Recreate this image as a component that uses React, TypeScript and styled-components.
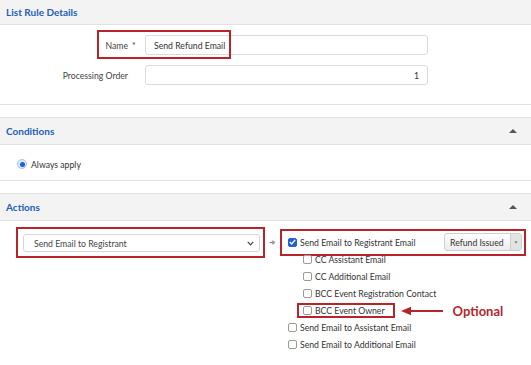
import React from 'react'
import styled, { createGlobalStyle } from 'styled-components'

const GlobalStyle = createGlobalStyle`
  body {
    margin: 0;
    background: #ffffff;
    font-family: Lato, "Liberation Sans", sans-serif;
    font-size: 8.7px;
    color: #333333;
  }
`

const Page = styled.div`
  width: 531px;
  height: 365px;
  overflow: hidden;
`

const Section = styled.section`
  border-top: 1px solid #e2e2e2;
  border-bottom: 1px solid #e2e2e2;
  margin-bottom: 12px;

  &:first-child {
    border-top: none;
  }
  &:last-child {
    border-bottom: none;
    margin-bottom: 0;
  }
`

const SectionHeader = styled.div`
  height: 26px;
  display: flex;
  align-items: center;
  justify-content: space-between;
  padding: 0 14px 0 6px;
  background: #f3f3f3;
  border-bottom: 1px solid #e2e2e2;

  ${Section}:first-child & {
    height: 24px;
  }
`

const Title = styled.h2`
  margin: 0;
  font-size: 10px;
  font-weight: 700;
  color: #2460b5;
`

const Collapse = styled.span`
  width: 0;
  height: 0;
  border-left: 4px solid transparent;
  border-right: 4px solid transparent;
  border-bottom: 4px solid #555555;
`

const FormBody = styled.div`
  display: grid;
  grid-template-columns: 128px 283px;
  column-gap: 17px;
  row-gap: 10px;
  padding: 10px 0 19px;
`

const FieldLabel = styled.label`
  position: relative;
  align-self: center;
  text-align: right;
  color: #444444;
`

const Required = styled.span`
  position: absolute;
  left: calc(100% + 4px);
  top: 0;
`

const FieldWrap = styled.div`
  position: relative;
`

const TextInput = styled.div<{ $align?: 'left' | 'right' }>`
  height: 20px;
  box-sizing: border-box;
  display: flex;
  align-items: center;
  justify-content: ${({ $align }) => ($align === 'right' ? 'flex-end' : 'flex-start')};
  padding: 0 8px;
  border: 1px solid #dcdcdc;
  border-radius: 3px;
  background: #ffffff;
  color: #333333;
`

const Highlight = styled.span<{ $t: number; $r: number; $b: number; $l: number }>`
  position: absolute;
  top: ${({ $t }) => $t}px;
  right: ${({ $r }) => $r}px;
  bottom: ${({ $b }) => $b}px;
  left: ${({ $l }) => $l}px;
  border: 2px solid #b7252b;
  pointer-events: none;
`

const ConditionsBody = styled.div`
  display: flex;
  align-items: center;
  gap: 4px;
  height: 14px;
  padding: 12px 0 9px 17px;
`

const Radio = styled.span`
  width: 10px;
  height: 10px;
  box-sizing: border-box;
  border-radius: 50%;
  border: 1px solid #a9c4f2;
  background: #dce8fc;
  display: flex;
  align-items: center;
  justify-content: center;

  &::after {
    content: '';
    width: 5px;
    height: 5px;
    border-radius: 50%;
    background: #1a62dc;
  }
`

const ActionsBody = styled.div`
  display: flex;
  align-items: flex-start;
  padding: 13px 0 0 23px;
`

const SelectWrap = styled.div`
  position: relative;
  flex: none;
`

const Select = styled.div`
  width: 237px;
  height: 18px;
  box-sizing: border-box;
  display: flex;
  align-items: center;
  justify-content: space-between;
  padding: 0 5px 0 10px;
  border: 1px solid #d6d6d6;
  border-radius: 3px;
  background: #ffffff;
  color: #444444;
`

const Connector = styled.span`
  width: 28px;
  flex: none;
  padding: 2px 0 0 9px;
  box-sizing: border-box;
  font-size: 9px;
  letter-spacing: -1px;
  color: #444444;
`

const CheckList = styled.div`
  width: 234px;
  margin-top: -1px;
  display: flex;
  flex-direction: column;
`

const MainRow = styled.div`
  position: relative;
  height: 18px;
  display: flex;
  align-items: center;
  gap: 2px;
  white-space: nowrap;
`

const SubList = styled.div<{ $indent: number }>`
  display: flex;
  flex-direction: column;
  padding-left: ${({ $indent }) => $indent}px;
`

const ItemRow = styled.div`
  height: 17px;
  display: flex;
  align-items: center;
  white-space: nowrap;
`

const Item = styled.span`
  position: relative;
  display: inline-flex;
  align-items: center;
  gap: 2px;
`

const Box = styled.span<{ $checked?: boolean }>`
  width: 9px;
  height: 9px;
  box-sizing: border-box;
  margin-right: 1px;
  border-radius: 2px;
  border: 1px solid ${({ $checked }) => ($checked ? '#1d63d6' : '#9a9a9a')};
  background: ${({ $checked }) => ($checked ? '#1d63d6' : '#ffffff')};
  display: flex;
  align-items: center;
  justify-content: center;
  flex: none;
`

const Dropdown = styled.div`
  margin-left: auto;
  width: 78px;
  height: 18px;
  box-sizing: border-box;
  display: flex;
  border: 1px solid #cfcfcf;
  border-radius: 3px;
  background: linear-gradient(#ffffff, #ececec);
  overflow: hidden;
`

const DropdownText = styled.span`
  flex: 1;
  display: flex;
  align-items: center;
  padding-left: 5px;
  color: #333333;
`

const DropdownArrow = styled.span`
  width: 10px;
  display: flex;
  align-items: center;
  justify-content: center;
  background: #e3e3e3;
  border-left: 1px solid #d0d0d0;
  font-size: 5px;
  color: #888888;
`

const Note = styled.span`
  display: inline-flex;
  align-items: center;
  gap: 10px;
  margin-left: 16px;
  font-size: 13px;
  font-weight: 700;
  color: #b3262c;
`

const Check = () => (
  <svg width="7" height="6" viewBox="0 0 7 6">
    <path d="M0.8 3.1 L2.7 4.9 L6.2 0.9" fill="none" stroke="#ffffff" strokeWidth="1.4" />
  </svg>
)

const Chevron = () => (
  <svg width="7" height="5" viewBox="0 0 7 5">
    <path d="M0.8 0.8 L3.5 3.8 L6.2 0.8" fill="none" stroke="#444444" strokeWidth="1.2" />
  </svg>
)

const LeftArrow = () => (
  <svg width="42" height="10" viewBox="0 0 42 10">
    <path d="M0 5 L10 0.8 L10 9.2 Z" fill="#b3262c" />
    <rect x="9" y="4" width="33" height="2" fill="#b3262c" />
  </svg>
)

function CheckItem({ label, checked }: { label: string; checked?: boolean }) {
  return (
    <ItemRow>
      <Item>
        <Box $checked={checked}>{checked && <Check />}</Box>
        {label}
      </Item>
    </ItemRow>
  )
}

export default function App() {
  return (
    <Page>
      <GlobalStyle />

      <Section>
        <SectionHeader>
          <Title>List Rule Details</Title>
        </SectionHeader>
        <FormBody>
          <FieldLabel>
            Name
            <Required>*</Required>
          </FieldLabel>
          <FieldWrap>
            <TextInput>Send Refund Email</TextInput>
            <Highlight $t={-5} $r={197} $b={-4} $l={-48} />
          </FieldWrap>
          <FieldLabel>Processing Order</FieldLabel>
          <TextInput $align="right">1</TextInput>
        </FormBody>
      </Section>

      <Section>
        <SectionHeader>
          <Title>Conditions</Title>
          <Collapse />
        </SectionHeader>
        <ConditionsBody>
          <Radio />
          Always apply
        </ConditionsBody>
      </Section>

      <Section>
        <SectionHeader>
          <Title>Actions</Title>
          <Collapse />
        </SectionHeader>
        <ActionsBody>
          <SelectWrap>
            <Select>
              Send Email to Registrant
              <Chevron />
            </Select>
            <Highlight $t={-7} $r={-5} $b={-6} $l={-7} />
          </SelectWrap>
          <Connector>-»</Connector>
          <CheckList>
            <MainRow>
              <Box $checked>
                <Check />
              </Box>
              Send Email to Registrant Email
              <Dropdown>
                <DropdownText>Refund Issued</DropdownText>
                <DropdownArrow>▼</DropdownArrow>
              </Dropdown>
              <Highlight $t={-4} $r={-4} $b={-5} $l={-8} />
            </MainRow>
            <SubList $indent={15}>
              <CheckItem label="CC Assistant Email" />
              <CheckItem label="CC Additional Email" />
              <CheckItem label="BCC Event Registration Contact" />
              <ItemRow>
                <Item>
                  <Box />
                  BCC Event Owner
                  <Highlight $t={-2} $r={-10} $b={-2} $l={-6} />
                </Item>
                <Note>
                  <LeftArrow />
                  Optional
                </Note>
              </ItemRow>
            </SubList>
            <CheckItem label="Send Email to Assistant Email" />
            <CheckItem label="Send Email to Additional Email" />
          </CheckList>
        </ActionsBody>
      </Section>
    </Page>
  )
}
